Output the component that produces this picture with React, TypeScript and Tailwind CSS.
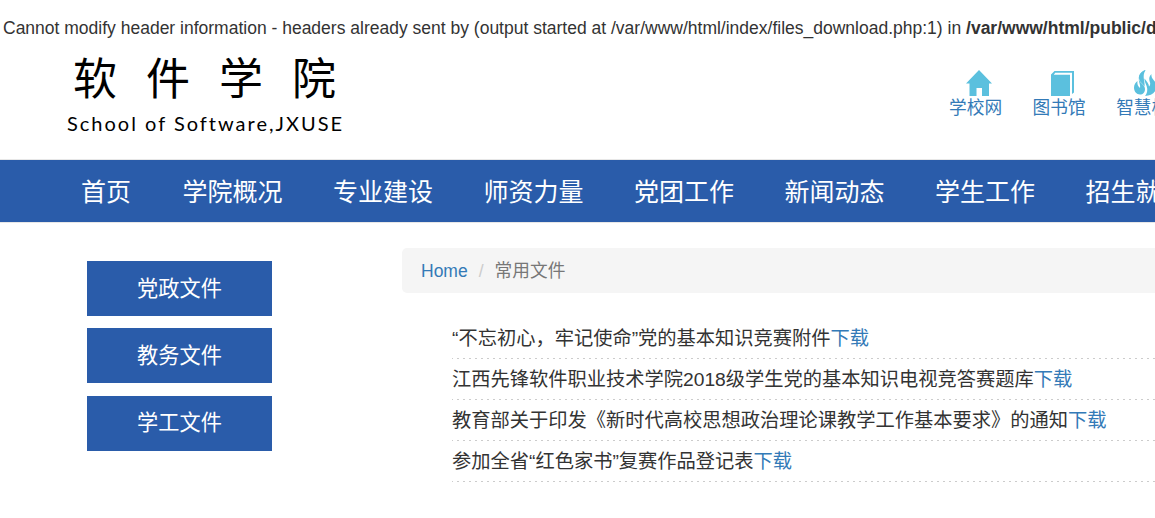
import React from 'react';

interface FileItem {
  title: string;
}

const navItems = ['首页', '学院概况', '专业建设', '师资力量', '党团工作', '新闻动态', '学生工作', '招生就业'];

const categories = ['党政文件', '教务文件', '学工文件'];

const files: FileItem[] = [
  { title: '“不忘初心，牢记使命”党的基本知识竞赛附件' },
  { title: '江西先锋软件职业技术学院2018级学生党的基本知识电视竞答赛题库' },
  { title: '教育部关于印发《新时代高校思想政治理论课教学工作基本要求》的通知' },
  { title: '参加全省“红色家书”复赛作品登记表' }
];

const HomeIcon: React.FC = () => (
  <svg width="26" height="26" viewBox="0 0 26 26" fill="#5bc0de">
    <path d="M13 0L26 13.5H23V26H16V18H10.5V26H3.5V13.5H0Z" />
  </svg>
);

const BookIcon: React.FC = () => (
  <svg width="26" height="26" viewBox="0 0 26 26" fill="#5bc0de">
    <path d="M1 4.5L4.5 1H24V22.5L22 24V2.8H5.2L3.8 4.8H20V26H1Z" />
  </svg>
);

const FireIcon: React.FC = () => (
  <svg width="26" height="26" viewBox="0 0 26 26" fill="#5bc0de">
    <path d="M12.5 0C8 2 5.5 5 5.8 9C6.2 13 12 14.5 12 19C12 22.5 10 24.5 7 24.5C3.5 24.5 1 21.5 1 17.5C1 14.5 2.5 12.5 4.5 11C4 14 4.8 16 7 18C7.8 15 5.8 13 5.8 9Z" />
    <path d="M12.5 0C7 2 5 6 6.5 10.5C7.5 13 10 13.5 11.5 16.5C12.5 12 8.5 6.5 12.5 0Z" />
    <path d="M18.5 4C15.5 7 16 10 17 12.5C17.5 14 17 15.5 16 16.5C16 13.5 13.5 11.5 11.5 8.5C11 12 13.8 15 14.2 18.5C14.5 22 13.5 24 12 26C18.5 26 23.5 22 23.5 16.5C23.5 10.5 17.5 9.5 18.5 4Z" />
  </svg>
);

const quickLinks = [
  { label: '学校网', Icon: HomeIcon },
  { label: '图书馆', Icon: BookIcon },
  { label: '智慧校园', Icon: FireIcon }
];

const Header: React.FC = () => (
  <header className="flex h-[119px] justify-between pl-[67px]">
    <div className="flex flex-col text-black whitespace-nowrap">
      <div className="pl-[6px] pt-[13px] text-[44px] leading-[54px] tracking-[29px]">软件学院</div>
      <div className="font-[Lato] text-[20px] leading-[24px] tracking-[2px] pt-[4px]">
        School of Software,JXUSE
      </div>
    </div>
    <div className="flex w-[207px] shrink-0 gap-[30.5px] pt-[30px] pl-px">
      {quickLinks.map(({ label, Icon }) => (
        <a key={label} className="flex shrink-0 flex-col items-start text-[17.7px] leading-[25px] text-[#337ab7]">
          <span className="h-[26px] pl-[17px]">
            <Icon />
          </span>
          <span>{label}</span>
        </a>
      ))}
    </div>
  </header>
);

const Nav: React.FC = () => (
  <nav className="flex h-[64px] items-center gap-[50.5px] border-y border-[#e7e7e7] bg-[#2a5caa] pt-[3px] pl-[81px] text-[25px] whitespace-nowrap text-white">
    {navItems.map((item) => (
      <a key={item} className="shrink-0 first:mr-[1px]">{item}</a>
    ))}
  </nav>
);

const Sidebar: React.FC = () => (
  <aside className="flex w-[185px] shrink-0 flex-col gap-[12.4px] pt-[13px]">
    {categories.map((name) => (
      <a key={name} className="flex h-[55px] items-center justify-center bg-[#2a5caa] text-[21.2px] leading-[30px] text-white">
        {name}
      </a>
    ))}
  </aside>
);

const FileList: React.FC = () => (
  <ul className="mt-[25px] ml-[50px] text-[19.25px] leading-[42px] text-[#333]">
    {files.map(({ title }) => (
      <li
        key={title}
        className="h-[41px] bg-[repeating-linear-gradient(90deg,#ccc_0_1px,transparent_1px_5px,#ccc_5px_6px)] bg-[length:100%_1px] bg-bottom bg-no-repeat"
      >
        {title}
        <a className="text-[#337ab7]">下载</a>
      </li>
    ))}
  </ul>
);

const App: React.FC = () => {
  return (
    <div className="h-[518px] w-full overflow-hidden bg-white font-['Liberation_Sans','Noto_Sans_CJK_SC',sans-serif] text-[17.5px] text-[#333]">
      <div className="h-[40px] pt-[16px] pl-[3px] leading-[24px] whitespace-nowrap">
        Cannot modify header information - headers already sent by (output started at /var/www/html/index/files_download.php:1) in{' '}
        <b>/var/www/html/public/download.php</b>
      </div>
      <Header />
      <Nav />
      <div className="flex pt-[25px] pl-[87px]">
        <Sidebar />
        <main className="ml-[130px] min-w-0 flex-1 whitespace-nowrap">
          <div className="flex h-[45px] items-center rounded-l-[5px] bg-[#f5f5f5] pt-[2px] pl-[19px]">
            <a className="text-[#337ab7]">Home</a>
            <span className="px-[11px] text-[#ccc]">/</span>
            <span className="text-[17.7px] text-[#777]">常用文件</span>
          </div>
          <FileList />
        </main>
      </div>
    </div>
  );
};

export default App;
